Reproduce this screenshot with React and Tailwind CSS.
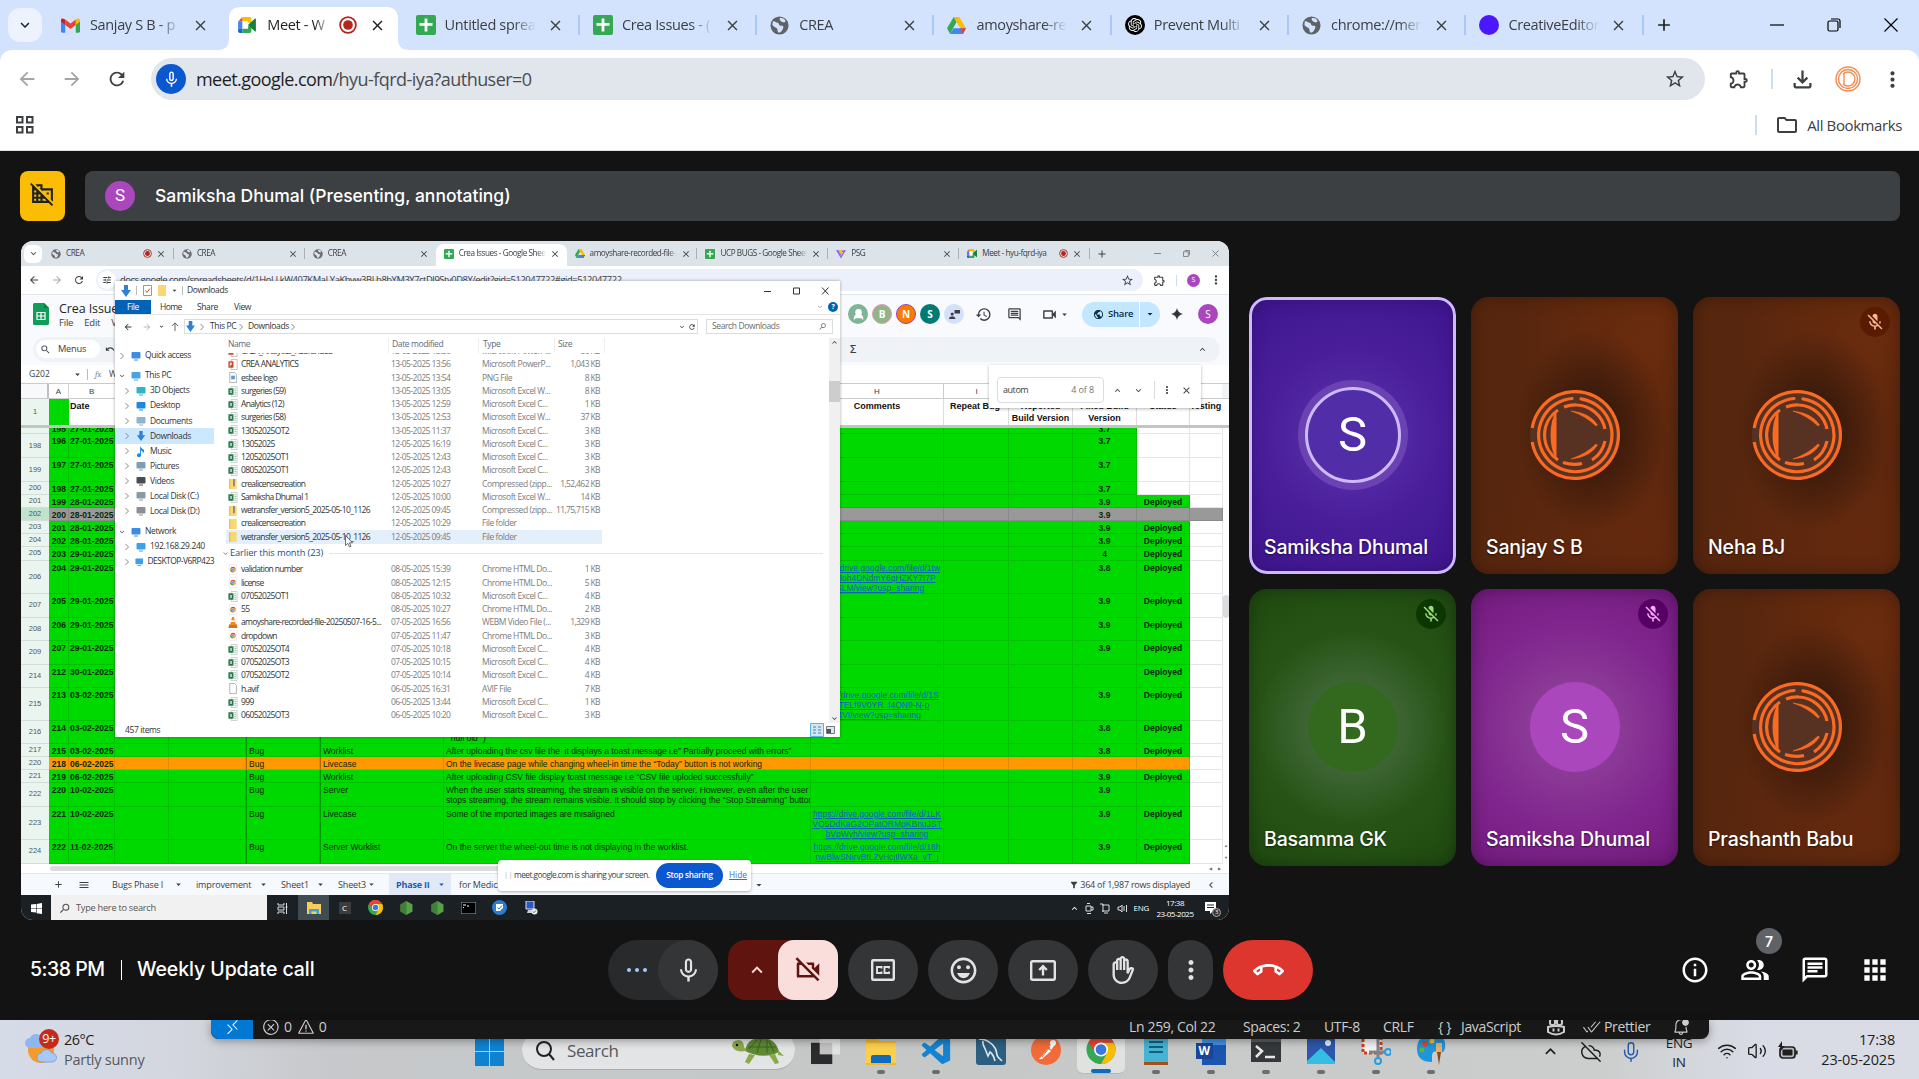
import React from "react";
import {
  MdMicNone, MdMicOff, MdOutlineVideocamOff, MdOutlineEmojiEmotions,
  MdOutlineBackHand, MdMoreVert, MdOutlineCallEnd, MdOutlineInfo, MdOutlinePeopleAlt, MdOutlineChat, MdApps,
  MdDomainDisabled, MdOutlineExtension, MdPublic, MdHistory, MdOutlineComment, MdOutlineVideocam, MdKeyboardArrowUp,
  MdKeyboardArrowDown, MdClose, MdAdd, MdArrowDropDown, MdStarBorder, MdOutlineFolder, MdSearch, MdMenu,
  MdChevronLeft, MdTune, MdFilterAlt, MdUndo, MdOutlineFileDownload, MdArrowBack, MdArrowForward, MdRefresh,
} from "react-icons/md";
import { VscRemote, VscError, VscWarning, VscCheckAll, VscBellDot } from "react-icons/vsc";
import { SiOpenai } from "react-icons/si";
import { BiLogoVisualStudio } from "react-icons/bi";
import { Wifi, Volume2, CloudOff, Mic } from "lucide-react";

/* ---------- small drawn icons ---------- */
const Sheets = ({ c }) => (
  <svg viewBox="0 0 20 20" className={c}>
    <rect width="20" height="20" rx="2" fill="#34a853" />
    <path d="M8.600 3.500h2.800v4.500H16.500v2.800h-5.100V16.500H8.600v-5.700H3.500V8h5.100z" fill="#fff" />
  </svg>
);
const Drive = ({ c }) => (
  <svg viewBox="0 0 20 18" className={c}>
    <path d="M7 0h6l7 12h-6z" fill="#fbbc04" />
    <path d="M7 0l3 5.200L3.200 18 0 12z" fill="#34a853" />
    <path d="M6.800 12H20l-3.200 6H3.200z" fill="#4285f4" />
    <path d="M14 12h6l-3.200 6z" fill="#ea4335" />
  </svg>
);
const MeetLogo = ({ c }) => (
  <svg viewBox="0 0 20 18" className={c}>
    <path d="M5 0v5H0z" fill="#ea4335" />
    <path d="M0 5h5v8H0z" fill="#4285f4" />
    <path d="M0 13h5v5H2a2 2 0 0 1-2-2z" fill="#1967d2" />
    <path d="M5 0h8a2 2 0 0 1 2 2v4.500h-4V5H5z" fill="#fbbc04" />
    <path d="M5 13h6v-2.500h4V16a2 2 0 0 1-2 2H5z" fill="#34a853" />
    <path d="M5 5h6v8H5z" fill="#fff" />
    <path d="M11 9l8-7.200c.5-.4 1-.1 1 .5v13.400c0 .6-.5.900-1 .5z" fill="#188038" />
  </svg>
);
const Gmail = ({ c }) => (
  <svg viewBox="0 0 20 15" className={c}>
    <path d="M0 2v11.500A1.500 1.500 0 0 0 1.500 15H4.500V6z" fill="#4285f4" />
    <path d="M20 2v11.500a1.500 1.500 0 0 1-1.500 1.500H15.500V6z" fill="#34a853" />
    <path d="M15.500 1.200L18 .2c1.200-.4 2 .6 2 1.800v1.400L15.500 7z" fill="#fbbc04" />
    <path d="M4.500 1.200L2 .2C.8-.2 0 .8 0 2v1.400L4.500 7z" fill="#c5221f" />
    <path d="M4.500 1.200L10 5.400l5.500-4.200V7L10 11.200 4.500 7z" fill="#ea4335" />
  </svg>
);
const Chrome = ({ c }) => (
  <svg viewBox="0 0 30 30" className={c}>
    <circle cx="15" cy="15" r="15" fill="#34a853" />
    <path d="M15 8h13.300A15 15 0 0 1 15 30l6-11z" fill="#fbbc04" />
    <path d="M2 7.500A15 15 0 0 1 28.300 8H15a7 7 0 0 0-6.300 10z" fill="#ea4335" />
    <circle cx="15" cy="15" r="7.200" fill="#fff" />
    <circle cx="15" cy="15" r="5.500" fill="#3b78e7" />
  </svg>
);
const Globe = ({ c, light }) => (
  <svg viewBox="0 0 20 20" className={c}>
    <circle cx="10" cy="10" r="9.500" fill={light ? "#6b6f74" : "#5f6368"} />
    <path d="M3 5.500c2.500-.5 3 1.500 5 1.500 1.500 0 1 2 2.500 3s3-.5 3.500 1-1 3-1.500 4.500c-1 1.500-3 2.500-4 1.500s0-3-1.500-4S3.500 11 2.500 9.500zM10 2.500c2-1 5 0 6 2s-1 2.500-2.500 2S10 4.500 10 2.500z" fill={light ? "#dfe5ea" : "#d3e3fd"} />
  </svg>
);
const Vite = ({ c }) => (
  <svg viewBox="0 0 20 20" className={c}>
    <path d="M0 2l10 1.500L20 2 10 19z" fill="#8a5cf6" />
    <path d="M6 2l7-1-1 5h3l-6 10 1-7H7z" fill="#fbc02d" />
  </svg>
);
const Rec = ({ c }) => (
  <svg viewBox="0 0 16 16" className={c}>
    <circle cx="8" cy="8" r="7" fill="none" stroke="#b3261e" strokeWidth="1.600" />
    <circle cx="8" cy="8" r="4.300" fill="#b3261e" />
  </svg>
);
const Swirl = ({ c }) => (
  <svg viewBox="-45 -45 90 90" className={c} fill="none" stroke="#fb6a22" strokeWidth="3.200">
    <circle r="45" fill="#573222" stroke="none" />
    <path d="M-42.800 -7A43.400 43.400 0 1 1 -42.800 7" />
    <path d="M6 -36.200A36.700 36.700 0 1 1 -3 -36.500" strokeLinecap="round" />
    <path d="M-11 -28Q-4 -30.500 2 -30A30 30 0 0 1 30 -6" />
    <path d="M30 6A30 30 0 0 1 17 25M7 28.500Q-2 30.500 -12 27.500" />
    <path d="M-17 -25A30 30 0 0 0 -17 25" />
    <path d="M-18.500 -25.500V25.500Q-24.500 14 -24.500 0Q-24.500 -14 -18.500 -25.500Z" fill="#fb6a22" stroke="none" />
    <path d="M-4 -24Q15 -22 22.500 -10L21 -9Q11 -19 -4 -24ZM-4 24Q15 22 22.500 10L21 9Q11 19 -4 24Z" fill="#fb6a22" strokeWidth=".6" />
  </svg>
);
const FileIcon = ({ k }) => {
  if (k === "z" || k === "f")
    return (
      <svg viewBox="0 0 10 12" className="h-[11px] w-[10px]">
        <path d="M1 1h8v11H1z" fill="#f8d775" />
        <path d="M1 1h1v11H1z" fill="#e3b341" />
        {k === "z" && <path d="M5 1h2v8H5z" fill="#8f8a78" />}
      </svg>
    );
  if (k === "c")
    return (
      <svg viewBox="0 0 10 12" className="h-[11px] w-[10px]">
        <path d="M1 .500h8v11H1z" fill="#fff" stroke="#ddd" strokeWidth=".5" />
        <circle cx="5" cy="6.200" r="3" fill="#e8a33d" />
        <path d="M2.200 5a3 3 0 0 1 5.600 0z" fill="#db4437" />
        <path d="M2 6a3 3 0 0 0 3 3V6z" fill="#2e9e57" />
        <circle cx="5" cy="6.200" r="1.400" fill="#4285f4" stroke="#fff" strokeWidth=".5" />
      </svg>
    );
  if (k === "v")
    return (
      <svg viewBox="0 0 10 12" className="h-[11px] w-[10px]">
        <path d="M4 0h2l2 8H2z" fill="#f08a1d" />
        <path d="M3.200 3.500h3.600l.5 2H2.700z" fill="#fff" />
        <path d="M1 8h8l1 4H0z" fill="#d9730d" />
      </svg>
    );
  if (k === "p")
    return (
      <svg viewBox="0 0 10 12" className="h-[11px] w-[10px]">
        <path d="M3 .500h6.500v11H3z" fill="#fff" stroke="#d9826b" strokeWidth=".6" />
        <path d="M0 2.500h5.500v7H0z" fill="#c8472b" />
        <path d="M2 4v4M2 4.400h1.400v1.600H2" stroke="#fff" strokeWidth=".8" fill="none" />
      </svg>
    );
  if (k === "d" || k === "i")
    return (
      <svg viewBox="0 0 10 12" className="h-[11px] w-[10px]">
        <path d="M1.500 .500h5l2.200 2.200v8.800H1.500z" fill="#fff" stroke="#8b8b8b" strokeWidth=".7" />
        {k === "i" && <path d="M3 4h4v4H3z" fill="#5b9bd5" />}
      </svg>
    );
  return (
    <svg viewBox="0 0 10 12" className="h-[11px] w-[10px]">
      <path d="M3 .500h6.500v11H3z" fill="#fff" stroke="#9bb5a5" strokeWidth=".6" />
      <path d="M6.500 3h2M6.500 5h2M6.500 7h2M6.500 9h2" stroke="#6f9d80" strokeWidth=".7" />
      <path d="M0 2.500h5.500v7H0z" fill="#1f7246" />
      <path d="M1.600 4.200l2.300 3.600M3.900 4.200L1.600 7.800" stroke="#fff" strokeWidth=".8" />
    </svg>
  );
};

/* ---------- browser chrome ---------- */
const tabs = [
  { t: "Sanjay S B - p", i: <Gmail c="h-[15px] w-[19px]" /> },
  { t: "Meet - W", i: <MeetLogo c="h-4 w-[18px]" />, active: true },
  { t: "Untitled sprea", i: <Sheets c="size-5" />, sep: true },
  { t: "Crea Issues - (", i: <Sheets c="size-5" />, sep: true },
  { t: "CREA", i: <Globe c="size-[19px]" />, sep: true },
  { t: "amoyshare-re", i: <Drive c="h-[17px] w-[19px]" />, sep: true },
  { t: "Prevent Multi", i: <span className="flex size-5 items-center justify-center rounded-full bg-black text-white"><SiOpenai size={14} /></span>, sep: true },
  { t: "chrome://mem", i: <Globe c="size-[19px]" />, sep: true },
  { t: "CreativeEditor", i: <span className="size-5 rounded-full bg-[#4a17ff]" />, sep: true },
];

function Browser() {
  return (
    <header className="h-[151px] shrink-0 bg-[#d3e3fd] font-['Open_Sans',sans-serif] text-[#1f1f1f]">
      <div className="flex h-[50px] items-stretch">
        <div className="flex w-12 items-center pl-2">
          <div className="flex h-[34px] w-[34px] items-center justify-center rounded-xl bg-[#ecf3fe]"><MdKeyboardArrowDown size={18} /></div>
        </div>
        {tabs.map((b, i) => (
          <div key={i} className="relative flex w-[177.300px] items-center">
            {b.active && (
              <svg viewBox="0 0 193 43" className="absolute -left-2 bottom-0 h-[43px] w-[193px]">
                <path d="M0 43c9 0 12-4 12-12V12C12 4 16 0 24 0h145c8 0 12 4 12 12v19c0 8 3 12 12 12z" fill="#fff" />
              </svg>
            )}
            <div className="relative flex w-full items-center pl-[13px]">
              <div className="flex w-[29px] items-center">{b.i}</div>
              <div className={"overflow-hidden whitespace-nowrap text-[14.500px] tracking-[-0.350px] [mask-image:linear-gradient(to_right,#000_75%,transparent)] " + (b.active ? "w-[64px]" : "w-[91px] text-[#3c4043]")}>{b.t}</div>
              {b.active && <Rec c="ml-[8px] size-[18px]" />}
              <MdClose size={17} className={b.active ? "ml-[12px]" : "ml-[11px] text-[#3c4043]"} />
            </div>
            {b.sep && <div className="absolute right-0 h-5 w-0.5 bg-[#a8c7fa]" />}
          </div>
        ))}
        <div className="flex flex-1 items-center justify-between pl-[10px] pr-[21px]">
          <MdAdd size={20} />
          <div className="flex items-center gap-[43px]">
            <svg viewBox="0 0 14 14" className="size-3.5" stroke="#000" strokeWidth="1.200"><path d="M0 7h14" /></svg>
            <svg viewBox="0 0 14 14" className="size-3.5" stroke="#000" strokeWidth="1.200" fill="none"><rect x="1" y="3" width="10" height="10" rx="1.500" /><path d="M4 1h7a2 2 0 0 1 2 2v7" /></svg>
            <svg viewBox="0 0 14 14" className="size-3.5" stroke="#000" strokeWidth="1.200"><path d="M.5.500l13 13M13.500.500l-13 13" /></svg>
          </div>
        </div>
      </div>
      <div className="h-[100px] rounded-t-xl bg-white pt-2">
        <div className="flex h-[42px] items-center">
          <div className="flex w-[151px] items-center gap-[23px] pl-4">
            <MdArrowBack size={22} className="text-[#a3a5a8]" />
            <MdArrowForward size={22} className="text-[#a3a5a8]" />
            <MdRefresh size={22} className="text-[#3c4043]" />
          </div>
          <div className="flex h-[42px] w-[1554px] items-center rounded-full bg-[#e1e5ec] pl-[5px] pr-[19px]">
            <span className="flex size-[30px] items-center justify-center rounded-full bg-[#0b57d0] text-white"><MdMicNone size={19} /></span>
            <span className="ml-[10px] flex-1 whitespace-nowrap text-[18px] tracking-[-0.550px]">meet.google.com<span className="text-[#4a4d51]">/hyu-fqrd-iya?authuser=0</span></span>
            <MdStarBorder size={22} className="text-[#3c4043]" />
          </div>
          <MdOutlineExtension size={22} className="ml-[23px] text-[#3c4043]" />
          <div className="ml-[21px] h-5 w-0.5 bg-[#c9dcfb]" />
          <MdOutlineFileDownload size={27} className="ml-[16px] text-[#3c4043]" />
          <svg viewBox="0 0 26 26" className="ml-[19px] size-[26px]" fill="none" stroke="#f58a4f" strokeWidth="1.400">
            <circle cx="13" cy="13" r="12" /><circle cx="13" cy="13" r="9.500" /><path d="M8 8a7 7 0 1 1 0 10" /><path d="M9 7l9 6-9 6z" fill="#fff" stroke="none" /><path d="M9 7v12" />
          </svg>
          <MdMoreVert size={25} className="ml-[19px] text-[#3c4043]" />
        </div>
        <div className="flex h-[50px] items-center justify-between pl-4 pr-[17px]">
          <svg viewBox="0 0 18 18" className="size-[18px]" fill="none" stroke="#3c4043" strokeWidth="2"><path d="M1 1h5.500v5.500H1zM11 1h5.500v5.500H11zM1 11h5.500v5.500H1zM11 11h5.500v5.500H11z" /></svg>
          <div className="flex items-center">
            <div className="h-5 w-0.5 bg-[#c9dcfb]" />
            <MdOutlineFolder size={24} className="ml-[18px] text-[#3c4043]" />
            <span className="ml-2 text-[15px] tracking-[-0.400px] text-[#3c4043]">All Bookmarks</span>
          </div>
        </div>
      </div>
      <div className="h-px bg-[#dfe3e0]" />
    </header>
  );
}

/* ---------- shared spreadsheet ---------- */
const innerTabs = [
  { t: "CREA", i: <Globe light c="size-[10px] shrink-0" />, rec: true, sep: true },
  { t: "CREA", i: <Globe light c="size-[10px] shrink-0" />, sep: true },
  { t: "CREA", i: <Globe light c="size-[10px] shrink-0" /> },
  { t: "Crea Issues - Google Sheets", i: <Sheets c="size-[10px] shrink-0" />, active: true },
  { t: "amoyshare-recorded-file-2", i: <Drive c="h-[9px] w-[10px] shrink-0" />, sep: true },
  { t: "UCP BUGS - Google Sheets", i: <Sheets c="size-[10px] shrink-0" />, sep: true },
  { t: "PSG", i: <Vite c="size-[10px] shrink-0" />, sep: true },
  { t: "Meet - hyu-fqrd-iya", i: <MeetLogo c="h-[9px] w-[10px] shrink-0" />, rec: true, sep: true },
];

const G = "bg-[#00d900]";
const DR = "drive.google.com/file/d/";
const rows = [
  { n: "197", h: "h-[6px]", a: "195", b: "27-01-2025", k: "3.7", nodep: 1, cut: 1 },
  { n: "198", h: "h-[24px]", a: "196", b: "27-01-2025", k: "3.7", nodep: 1 },
  { n: "199", h: "h-[24px]", a: "197", b: "27-01-2025", k: "3.7", nodep: 1 },
  { n: "200", h: "h-[13px]", a: "198", b: "27-01-2025", k: "3.7", nodep: 1 },
  { n: "201", h: "h-[13px]", a: "199", b: "28-01-2025", k: "3.9", l: 1 },
  { n: "202", h: "h-[13px]", a: "200", b: "28-01-2025", k: "3.9", bg: "bg-[#999999]", all: 1 },
  { n: "203", h: "h-[13px]", a: "201", b: "28-01-2025", k: "3.9", l: 1 },
  { n: "204", h: "h-[13px]", a: "202", b: "28-01-2025", k: "3.9", l: 1 },
  { n: "205", h: "h-[13.500px]", a: "203", b: "29-01-2025", k: "4", l: 1 },
  { n: "206", h: "h-[33.500px]", a: "204", b: "29-01-2025", k: "3.8", l: 1, link: ["https://" + DR + "1tw", "TWS8oh4DNdmY6qHZKY7I7P", "lvSLM/view?usp=sharing"] },
  { n: "207", h: "h-[23.500px]", a: "205", b: "29-01-2025", k: "3.9", l: 1 },
  { n: "208", h: "h-[23.500px]", a: "206", b: "29-01-2025", k: "3.9", l: 1 },
  { n: "209", h: "h-[23.500px]", a: "207", b: "29-01-2025", k: "3.9", l: 1 },
  { n: "214", h: "h-[23.500px]", a: "212", b: "30-01-2025", k: "", l: 1 },
  { n: "215", h: "h-[33px]", a: "213", b: "03-02-2025", k: "3.9", l: 1, link: ["https://" + DR + "1S", "agvTELf9V0YR_f4ON9-N-p", "s4VI/view?usp=sharing"] },
  { n: "216", h: "h-[23px]", a: "214", b: "03-02-2025", k: "3.8", l: 1, g: ["The worklist shows the value as (", "\u201cnull old\u201d )"], drop: 1 },
  { n: "217", h: "h-[13px]", a: "215", b: "03-02-2025", k: "3.8", l: 1, e: "Bug", f: "Worklist", g: ["After uploading the csv file the\u00a0 it displays a toast message i.e\u201d Partially proceed with errors\u201d"] },
  { n: "220", h: "h-[13px]", a: "218", b: "06-02-2025", k: "", bg: "bg-[#ff9900]", e: "Bug", f: "Livecase", g: ["On the livecase page while changing wheel-in time the \u201cToday\u201d button is not working"] },
  { n: "221", h: "h-[13px]", a: "219", b: "06-02-2025", k: "3.9", l: 1, e: "Bug", f: "Worklist", g: ["After uploading CSV file display toast message i.e \u201cCSV file uploded successfully\u201d"] },
  { n: "222", h: "h-[23.500px]", a: "220", b: "10-02-2025", k: "3.9", e: "Bug", f: "Server", g: ["When the user starts streaming, the stream is visible on the server. However, even after the user", "stops streaming, the stream remains visible. It should stop by clicking the \u201cStop Streaming\u201d button"] },
  { n: "223", h: "h-[33.500px]", a: "221", b: "10-02-2025", k: "3.9", l: 1, e: "Bug", f: "Livecase", g: ["Some of the imported images are misaligned"], link: ["https://" + DR + "1LK", "VQ5DdKaG2OPatORMpKBnuJST", "bVpWyh/view?usp=sharing"] },
  { n: "224", h: "h-[23.500px]", a: "222", b: "11-02-2025", k: "3.9", l: 1, e: "Bug", f: "Server Worklist", g: ["On the server the wheel-out time is not displaying in the worklist."], link: ["https://" + DR + "18h", "nwBlwSNirvBtLZvHcjIlWXa_vT_j"] },
];
const cell = "shrink-0 overflow-hidden border-b border-r border-black/10 pt-[2px] whitespace-nowrap ";

function Row({ r }) {
  const bg = r.bg || G;
  const side = r.nodep ? "bg-white" : bg;
  return (
    <div className={"flex overflow-hidden text-[8.500px] leading-[10px] text-[#062a06] " + r.h}>
      <div className={"flex w-[28px] shrink-0 items-center justify-center border-b border-[#d5ddd9] text-[7.500px] text-[#555] " + (r.all ? "bg-[#bfe3cb]" : "bg-[#e9f5ee]")}>{r.cut ? "" : r.n}</div>
      <div className={cell + "w-[20px] pr-[2px] text-right font-bold " + bg}><div className={r.cut ? "-mt-[6px]" : ""}>{r.a}</div></div>
      <div className={cell + "w-[46px] pl-[1px] font-bold " + bg}><div className={r.cut ? "-mt-[6px]" : ""}>{r.b}</div></div>
      <div className={cell + "w-[54px] " + bg} />
      <div className={cell + "w-[77px] " + bg} />
      <div className={cell + "w-[74px] border-l border-l-black/30 pl-[2px] " + bg}>{r.e}</div>
      <div className={cell + "w-[124px] border-l border-l-black/30 pl-[2px] " + bg}>{r.f}</div>
      <div className={cell + "w-[367px] pl-[2px] " + bg}>
        {r.g && r.g.map((x, i) => <div key={i} className={r.drop && i ? "pl-[2px]" : ""}>{x}</div>)}
      </div>
      <div className={cell + "w-[133px] text-center text-[#0b62c4] underline " + bg}>
        {r.link && r.link.map((x) => <div key={x}>{x}</div>)}
      </div>
      <div className={cell + "w-[65px] " + bg} />
      <div className={cell + "w-[64px] " + bg} />
      <div className={cell + "w-[64px] text-center font-bold " + bg}><div className={r.cut ? "-mt-[6px]" : ""}>{r.k}</div></div>
      <div className={cell + "w-[53px] text-center font-bold " + side}>{r.l ? "Deployed" : ""}</div>
      <div className={cell + "w-[33px] " + (r.all ? bg : "bg-white")} />
    </div>
  );
}

const Avatar = ({ t, c }) => <span className={"flex size-5 items-center justify-center rounded-full text-[10px] font-bold text-white " + c}>{t}</span>;

const sheetTabs = [
  ["Bugs Phase I", "w-[84px]"],
  ["improvement", "w-[85px]"],
  ["Sheet1", "w-[57px]"],
  ["Sheet3", "w-[51px]"],
];

function SharedScreen() {
  return (
    <div className="relative flex h-[679px] w-[1208px] flex-col overflow-hidden rounded-xl bg-white font-['Open_Sans',sans-serif] text-[#3c4043]">
      {/* tab strip */}
      <div className="flex h-[25px] shrink-0 bg-[#dce3e9]">
        <div className="flex w-[22px] items-center pl-[3px]"><span className="flex h-[18px] w-[18px] items-center justify-center rounded-md bg-white"><MdKeyboardArrowDown size={11} /></span></div>
        {innerTabs.map((b, i) => (
          <div key={i} className={"relative flex w-[130.900px] items-center pl-[8px] " + (b.active ? "mt-[3px] rounded-t-lg bg-white pb-[3px]" : "")}>
            {b.i}
            <span className={"ml-[5px] overflow-hidden whitespace-nowrap text-[8.200px] tracking-[-0.450px] " + (b.rec ? "w-[72px]" : "w-[87px] [mask-image:linear-gradient(to_right,#000_90%,transparent)]")}>{b.t}</span>
            {b.rec && <Rec c="ml-[5px] size-[9px]" />}
            <MdClose size={10} className="ml-[4px] shrink-0" />
            {b.sep && <div className="absolute right-0 h-[11px] w-px bg-[#a9b0b6]" />}
          </div>
        ))}
        <div className="flex flex-1 items-center pl-[6px]">
          <MdAdd size={12} />
          <svg viewBox="0 0 8 8" className="ml-[46px] size-[7px]" stroke="#777" fill="none"><path d="M0 4h8" /></svg>
          <svg viewBox="0 0 8 8" className="ml-[22px] size-[7px]" stroke="#777" fill="none"><path d="M.5 2h5.500v5.500H.5zM2 .500h5.500V6" /></svg>
          <svg viewBox="0 0 8 8" className="ml-[22px] size-[7px]" stroke="#777" fill="none"><path d="M.5.500l7 7M7.500.500l-7 7" /></svg>
        </div>
      </div>
      {/* address row */}
      <div className="flex h-[29px] shrink-0 items-center border-b border-[#e3e6ea] bg-white">
        <MdArrowBack size={12} className="ml-[7px]" />
        <MdArrowForward size={12} className="ml-[11px] text-[#aaa]" />
        <MdRefresh size={12} className="ml-[10px]" />
        <div className="ml-[11px] flex h-[22px] w-[1047px] items-center rounded-full bg-[#ebf0fa] pl-[2px] pr-[9px]">
          <span className="flex size-[18px] items-center justify-center rounded-full bg-white"><MdTune size={10} /></span>
          <span className="ml-[4px] flex-1 text-[9.400px] tracking-[-0.440px]">docs.google.com/spreadsheets/d/1HoLLkW407KMaLYaKhyw3BLb8bYM3Y7ctDJ9Sty0D8Y/edit?gid=512047722#gid=512047722</span>
          <MdStarBorder size={13} />
        </div>
        <MdOutlineExtension size={13} className="ml-[10px]" />
        <div className="ml-[10px] h-[11px] w-px bg-[#c9dcfb]" />
        <span className="ml-[10px] flex size-[13px] items-center justify-center rounded-full bg-[#ab47bc] text-[7px] text-white">S</span>
        <MdMoreVert size={14} className="ml-[9px]" />
      </div>
      {/* document header */}
      <div className="flex h-[38px] shrink-0 items-center bg-[#f8fafd] pl-3">
        <svg viewBox="0 0 16 22" className="h-[22px] w-4 shrink-0">
          <path d="M1.500 0H11l5 5v15.500a1.500 1.500 0 0 1-1.500 1.500h-13A1.500 1.500 0 0 1 0 20.500v-19A1.500 1.500 0 0 1 1.500 0z" fill="#0f9d58" />
          <path d="M11 0l5 5h-5z" fill="#0b7d45" />
          <path d="M4 9.500h8v7H4zM8 9.500v7M4 13h8" fill="none" stroke="#fff" strokeWidth="1.200" />
        </svg>
        <div className="ml-[10px] w-[789px] shrink-0 pt-[3px]">
          <div className="text-[12.500px] leading-[15px] tracking-[-0.100px] text-[#1f1f1f]">Crea Issues</div>
          <div className="flex gap-[11px] text-[9.500px] leading-[14px] tracking-[-0.200px]"><span>File</span><span>Edit</span><span>View</span></div>
        </div>
        <div className="flex items-center gap-[4px]">
          <Avatar t={<svg viewBox="0 0 12 12" className="size-[13px]" fill="#fff"><circle cx="6" cy="4" r="3" /><path d="M1.500 11q0-6 4.500-6t4.500 6l-2-1.500H3.500z" /></svg>} c="bg-[#7fb496]" />
          <Avatar t="B" c="border border-[#e69ab0] bg-[#90b588]" />
          <Avatar t="N" c="border border-[#9c3fb5] bg-[#fb7a00]" />
          <Avatar t="S" c="bg-[#007b73]" />
          <Avatar t={<svg viewBox="0 0 12 12" className="size-[11px]" fill="#3c4043"><circle cx="3.500" cy="5.500" r="1.700" /><path d="M0 11c0-4 7-4 7 0zM6 1h6v4H6z" /></svg>} c="bg-[#d3e1f8]" />
        </div>
        <MdHistory size={17} className="ml-[11px]" />
        <MdOutlineComment size={15} className="ml-[15px]" />
        <MdOutlineVideocam size={17} className="ml-[19px]" />
        <MdArrowDropDown size={11} className="ml-[1px]" />
        <div className="ml-[12px] flex h-[25px] w-[78px] shrink-0 items-center rounded-full bg-[#c2e7ff] text-[#0b2b45]">
          <MdPublic size={11} className="ml-[11px]" />
          <span className="ml-[4px] w-[26px] text-[9.500px] font-semibold tracking-[-0.200px]">Share</span>
          <div className="ml-[5px] h-full w-px bg-white" />
          <MdArrowDropDown size={12} className="ml-[4px]" />
        </div>
        <svg viewBox="0 0 12 12" className="ml-[11px] size-[12px]"><path d="M6 0q.8 5.200 6 6-5.200.8-6 6-.8-5.200-6-6 5.200-.8 6-6z" fill="#333" /></svg>
        <span className="ml-[15px] flex size-5 items-center justify-center rounded-full bg-[#ab47bc] text-[10px] text-white">S</span>
      </div>
      {/* menu bar */}
      <div className="flex h-[32px] shrink-0 items-center bg-[#f8fafd] pl-[12px] pr-[9px]">
        <div className="flex h-[25px] flex-1 items-center rounded-full bg-[#eff3f8] pl-[3px] pr-[12px]">
          <div className="flex h-[18px] w-[64px] items-center rounded-full bg-white pl-[4px]"><MdSearch size={11} /><span className="ml-[7px] text-[9.300px] tracking-[-0.250px]">Menus</span></div>
          <MdUndo size={10} className="ml-[5px]" />
          <span className="ml-[735px] flex-1 text-[11px] font-semibold">Σ</span>
          <MdKeyboardArrowUp size={11} />
        </div>
      </div>
      {/* formula bar */}
      <div className="flex h-[19px] shrink-0 items-center border-b border-[#c8cccf] bg-white text-[8.500px]">
        <span className="ml-[8px] w-[43px]">G202</span>
        <MdArrowDropDown size={11} />
        <div className="ml-[4px] h-[11px] w-px bg-[#bbb]" />
        <span className="ml-[7px] w-[14px] font-serif italic text-[#888]">fx</span>
        <span>W</span>
      </div>
      {/* column letters */}
      <div className="flex h-[15px] shrink-0 border-b border-[#c8cccf] bg-white font-['Liberation_Sans',sans-serif] text-[8px] leading-[15px]">
        <div className="w-[28px] border-r-2 border-[#c0c0c0] bg-[#f8f9fa]" />
        <div className="w-[20px] border-r border-[#d5d5d5] text-center">A</div>
        <div className="w-[742px] pl-[20px]">B</div>
        <div className="w-[133px] border-r border-[#c8cccf] text-center">H</div>
        <div className="w-[65px] text-center">I</div>
        <div className="w-[213px]" />
        <div className="flex-1 bg-[#f1f3f4]" />
      </div>
      {/* frozen header row */}
      <div className="flex h-[29px] shrink-0 border-b-[3px] border-[#c2c5c4] bg-white font-['Liberation_Sans',sans-serif] text-[9px] font-bold leading-[12px] text-[#111]">
        <div className="flex w-[28px] items-center justify-center bg-[#e9f5ee] text-[7.500px] font-normal text-[#555]">1</div>
        <div className={"w-[20px] " + G} />
        <div className="w-[742px] pl-[1px] pt-[1px]">Date</div>
        <div className="w-[133px] border-r border-[#ddd] pt-[1px] text-center">Comments</div>
        <div className="w-[65px] whitespace-nowrap border-r border-[#ddd] pl-[6px] pt-[1px]">Repeat Bug</div>
        <div className="w-[64px] whitespace-nowrap border-r border-[#ddd] pt-[1px] text-center">Reported<br />Build Version</div>
        <div className="w-[64px] border-r border-[#ddd] pt-[1px] text-center">Fixed Build Version</div>
        <div className="w-[53px] border-r border-[#ddd] pt-[1px] text-center">Status</div>
        <div className="w-[33px] overflow-hidden pt-[1px]">Testing</div>
      </div>
      {/* sheet body */}
      <div className="flex h-[436px] shrink-0">
        <div className="w-[1202px] font-['Liberation_Sans',sans-serif]">{rows.map((r) => <Row key={r.n} r={r} />)}</div>
        <div className="flex flex-1 flex-col bg-white"><div className="mt-[167px] h-[23px] rounded bg-[#dadce0]" /><div className="mt-auto h-[24px] text-center text-[4px] leading-[12px] text-[#666]">▲<br />▼</div></div>
      </div>
      {/* horizontal scroll bar */}
      <div className="flex h-[9px] shrink-0 items-center bg-white pl-[29px]">
        <div className="h-[5px] w-[600px] rounded bg-[#dadce0]" />
        <div className="ml-auto flex gap-[6px] pr-[8px] text-[4px] text-[#666]"><span>◀</span><span>▶</span></div>
      </div>
      {/* sheet tabs */}
      <div className="flex h-[22px] shrink-0 items-center border-t border-[#e3e6ea] bg-[#f6f9fd] text-[9px] tracking-[-0.150px]">
        <MdAdd size={11} className="ml-[32px]" />
        <MdMenu size={12} className="ml-[14px] mr-[22px]" />
        {sheetTabs.map(([t, w]) => (
          <div key={t} className={"flex items-center justify-between " + w}>
            <span className="whitespace-nowrap">{t}</span><MdArrowDropDown size={11} className="mr-[12px]" />
          </div>
        ))}
        <div className="flex h-full w-[62px] items-center justify-between bg-[#e1e9f7] pl-[7px] pr-[4px] font-bold text-[#2458b8]"><span className="whitespace-nowrap tracking-[-0.200px]">Phase II</span><MdArrowDropDown size={11} /></div>
        <span className="ml-[8px] w-[294px]">for Medicaid</span>
        <MdArrowDropDown size={12} />
        <div className="ml-auto flex items-center pr-[12px]"><MdFilterAlt size={10} className="mr-[1px]" /><span className="tracking-[-0.250px]">364 of 1,987 rows displayed</span><MdChevronLeft size={12} className="ml-[15px]" /></div>
      </div>
      <WinTen />
      {/* find in sheet */}
      <div className="absolute left-[968px] top-[124px] flex h-[43px] w-[212px] items-center bg-white pl-[8px] pt-[7px] text-[9px] shadow-[0_1px_3px_rgba(0,0,0,0.3)]">
        <div className="flex h-[26px] w-[107px] items-center justify-between rounded border border-[#dadce0] pl-[5px] pr-[9px]"><span className="tracking-[-0.450px]">autom</span><span className="tracking-[-0.100px] text-[#70757a]">4 of 8</span></div>
        <MdKeyboardArrowUp size={11} className="ml-[8px]" /><MdKeyboardArrowDown size={11} className="ml-[10px]" />
        <div className="ml-[10px] h-[18px] w-px bg-[#dadce0]" />
        <MdMoreVert size={12} className="ml-[6px]" /><MdClose size={11} className="ml-[8px]" />
      </div>
      <Explorer />
      {/* screen share notice */}
      <div className="absolute left-[477px] top-[619px] flex h-[31px] w-[253px] items-center rounded-sm bg-white text-[8.300px] shadow-[0_1px_3px_rgba(0,0,0,0.3)]">
        <span className="ml-[6px] w-[10px] text-[7px] tracking-[1px] text-[#aaa]">||</span>
        <span className="w-[142px] whitespace-nowrap tracking-[-0.520px]">meet.google.com is sharing your screen.</span>
        <span className="flex h-[25px] w-[67px] items-center justify-center rounded-full bg-[#0b57d0] font-semibold tracking-[-0.300px] text-white">Stop sharing</span>
        <span className="ml-[6px] text-[#2f6fd6] underline">Hide</span>
      </div>
    </div>
  );
}

/* ---------- file explorer window ---------- */
const side = [
  { t: "Quick access", k: "#3a8ede", top: 1, gap: 1 },
  { t: "This PC", k: "#4aa3e0", top: 1, open: 1 },
  { t: "3D Objects", k: "#2fb3c9" },
  { t: "Desktop", k: "#1e88e5" },
  { t: "Documents", k: "#8fb3cc" },
  { t: "Downloads", k: "#2f7fd0", sel: 1, down: 1 },
  { t: "Music", k: "#1e88e5", note: 1 },
  { t: "Pictures", k: "#7d9db5" },
  { t: "Videos", k: "#4a4a55" },
  { t: "Local Disk (C:)", k: "#8a9aa5" },
  { t: "Local Disk (D:)", k: "#8a8f94", gap: 1 },
  { t: "Network", k: "#3a8ede", top: 1, open: 1 },
  { t: "192.168.29.240", k: "#3ea0e8" },
  { t: "DESKTOP-V6RP423", k: "#3ea0e8" },
];
const XC = "Microsoft Excel C...", XW = "Microsoft Excel W...", CH = "Chrome HTML Do...";
const recent = [
  ["p", "CREA ANALYTICS", "13-05-2025 13:56", "Microsoft PowerP...", "1,043 KB"],
  ["i", "esbee logo", "13-05-2025 13:54", "PNG File", "8 KB"],
  ["x", "surgeries (59)", "13-05-2025 13:05", XW, "8 KB"],
  ["x", "Analytics (12)", "13-05-2025 12:59", XC, "1 KB"],
  ["x", "surgeries (58)", "13-05-2025 12:53", XW, "37 KB"],
  ["x", "13052025OT2", "13-05-2025 11:37", XC, "3 KB"],
  ["x", "13052025", "12-05-2025 16:19", XC, "3 KB"],
  ["x", "12052025OT1", "12-05-2025 12:43", XC, "3 KB"],
  ["x", "08052025OT1", "12-05-2025 12:43", XC, "3 KB"],
  ["z", "crealicensecreation", "12-05-2025 10:27", "Compressed (zipp...", "1,52,462 KB"],
  ["x", "Samiksha Dhumal 1", "12-05-2025 10:00", XW, "14 KB"],
  ["z", "wetransfer_version5_2025-05-10_1126", "12-05-2025 09:45", "Compressed (zipp...", "11,75,715 KB"],
  ["f", "crealicensecreation", "12-05-2025 10:29", "File folder", ""],
  ["f", "wetransfer_version5_2025-05-10_1126", "12-05-2025 09:45", "File folder", "", 1],
];
const earlier = [
  ["c", "validation number", "08-05-2025 15:39", CH, "1 KB"],
  ["c", "license", "08-05-2025 12:15", CH, "5 KB"],
  ["x", "07052025OT1", "08-05-2025 10:32", XC, "4 KB"],
  ["c", "55", "08-05-2025 10:27", CH, "2 KB"],
  ["v", "amoyshare-recorded-file-20250507-16-5...", "07-05-2025 16:56", "WEBM Video File (...", "1,329 KB"],
  ["c", "dropdown", "07-05-2025 11:47", CH, "3 KB"],
  ["x", "07052025OT4", "07-05-2025 10:18", XC, "4 KB"],
  ["x", "07052025OT3", "07-05-2025 10:15", XC, "4 KB"],
  ["x", "07052025OT2", "07-05-2025 10:14", XC, "4 KB"],
  ["d", "h.avif", "06-05-2025 16:31", "AVIF File", "7 KB"],
  ["x", "999", "06-05-2025 13:44", XC, "1 KB"],
  ["x", "06052025OT3", "06-05-2025 10:20", XC, "3 KB"],
];
const FileRow = ({ f }) => (
  <div className={"ml-[12px] flex h-[13.250px] w-[376px] items-center whitespace-nowrap text-[#7b7b7b] " + (f[5] ? "bg-[#e3f0fb]" : "")}>
    <span className="w-[15px] pl-[2px]"><FileIcon k={f[0]} /></span>
    <span className="w-[150px] tracking-[-0.650px] text-[#333]">{f[1]}</span>
    <span className="w-[91px] tracking-[-0.550px]">{f[2]}</span>
    <span className="w-[68px] tracking-[-0.420px]">{f[3]}</span>
    <span className="flex-1 pr-[2px] text-right tracking-[-0.600px]">{f[4]}</span>
  </div>
);
const DownArrow = ({ c }) => <svg viewBox="0 0 10 12" className={c}><path d="M3 0h4v5h3l-5 7-5-7h3z" fill="#2f82d3" /></svg>;
const SideIcon = ({ s }) => {
  if (s.down) return <DownArrow c="h-[10px] w-[10px]" />;
  if (s.note) return <svg viewBox="0 0 10 12" className="h-[11px] w-[10px]" fill={s.k}><path d="M4 0q1 3 4 4 1 2-1 4 0-3-2-3v5a2.200 2 0 1 1-1-1.600z" /></svg>;
  return <svg viewBox="0 0 10 10" className="size-[10px]"><rect x=".5" y="1" width="9" height="6.500" rx="1" fill={s.k} /><path d="M3 9h4" stroke={s.k} /></svg>;
};
const Caret = ({ c }) => <svg viewBox="0 0 4 8" className={"h-[8px] w-[4px] " + (c || "")} fill="none" stroke="#888"><path d="M.5 1l3 3-3 3" /></svg>;

function Explorer() {
  return (
    <div className="absolute left-[94px] top-[40px] flex h-[456px] w-[725px] flex-col bg-white text-[8.500px] tracking-[-0.380px] text-[#333] shadow-[0_0_3px_rgba(0,0,0,0.35)]">
      <div className="flex h-[19px] items-center pl-[6px]">
        <DownArrow c="h-[12px] w-[10px]" />
        <div className="ml-[5px] h-[9px] w-px bg-[#bbb]" />
        <svg viewBox="0 0 9 11" className="ml-[6px] h-[11px] w-[9px]"><path d="M.5.500h8v10h-8z" fill="#fff" stroke="#999" /><path d="M2.500 5.500l1.500 2 3-4" fill="none" stroke="#d4543a" /></svg>
        <span className="ml-[6px] h-[11px] w-[8px] bg-[#f8d775]" />
        <MdArrowDropDown size={9} className="ml-[4px]" />
        <div className="ml-[3px] h-[9px] w-px bg-[#bbb]" />
        <span className="ml-[4px]">Downloads</span>
        <svg viewBox="0 0 66 8" className="ml-auto mr-[11px] h-[8px] w-[66px]" stroke="#333" fill="none"><path d="M1 4.500h7M30.500 1h6v6h-6zM59 .500l6.500 7M65.500.500l-6.500 7" /></svg>
      </div>
      <div className="flex h-[15px] items-center border-b border-[#e4e4e4]">
        <span className="flex h-full w-[36px] items-center justify-center bg-[#0063b8] text-white">File</span>
        <span className="ml-[9px] w-[37px] tracking-[-0.550px]">Home</span><span className="w-[37px]">Share</span><span>View</span>
        <MdKeyboardArrowDown size={8} className="ml-auto text-[#999]" />
        <span className="ml-[4px] mr-[2px] flex size-[10px] items-center justify-center rounded-full bg-[#0063b1] text-[7px] font-bold text-white">?</span>
      </div>
      <div className="flex h-[23px] items-center pl-[8px]">
        <MdArrowBack size={10} /><MdArrowForward size={10} className="ml-[9px] text-[#bbb]" /><MdKeyboardArrowDown size={7} className="ml-[6px]" />
        <svg viewBox="0 0 8 10" className="ml-[6px] h-[9px] w-[8px]" stroke="#555" fill="none"><path d="M4 10V1M.5 4.500L4 1l3.500 3.500" /></svg>
        <div className="ml-[5px] flex h-[15px] w-[514px] items-center border border-[#dcdcdc] pl-[1px]">
          <DownArrow c="h-[11px] w-[9px]" />
          <Caret c="ml-[5px] mr-[6px]" /><span className="w-[29px] whitespace-nowrap">This PC</span><Caret c="mr-[5px]" /><span className="w-[43px]">Downloads</span><Caret c="mr-auto" />
          <MdKeyboardArrowDown size={8} className="mr-[2px]" /><MdRefresh size={8} className="mr-[1px]" />
        </div>
        <div className="ml-[8px] flex h-[15px] w-[127px] items-center justify-between border border-[#dcdcdc] px-[5px] text-[#6b6b6b]"><span>Search Downloads</span><MdSearch size={9} className="-scale-x-100" /></div>
      </div>
      <div className="flex h-[385px]">
        <div className="w-[99px] pt-[10px]">
          {side.map((s) => (
            <div key={s.t} className={"flex h-[15.100px] items-center whitespace-nowrap " + (s.sel ? "bg-[#cce8ff] " : "") + (s.gap ? "mb-[5px]" : "")}>
              <span className={s.top ? "ml-[5px] w-[11px]" : "ml-[10px] w-[11px]"}>{s.open ? <MdKeyboardArrowDown size={8} className="-ml-[2px]" /> : <Caret />}</span>
              <SideIcon s={s} />
              <span className={"ml-[4px] " + (s.t.startsWith("DESK") ? "tracking-[-0.550px]" : "")}>{s.t}</span>
            </div>
          ))}
        </div>
        <div className="flex-1">
          <div className="flex h-[15px] items-center text-[#5b6b83]">
            <span className="ml-[14px] h-full w-[160px]">Name</span><span className="h-full w-[90px] border-l border-[#eee] pl-[3px]">Date modified</span><span className="h-full w-[76px] border-l border-[#eee] pl-[4px]">Type</span><span className="h-full w-[51px] border-x border-[#eee] pl-[3px]">Size</span>
          </div>
          <div className="flex h-[5px] items-end overflow-hidden"><FileRow f={["p", "CREA_Analytics_Rebranded", "13-05-2025 13:56", "Microsoft PowerP...", "86 KB"]} /></div>
          {recent.map((f, i) => <FileRow key={i} f={f} />)}
          <div className="flex h-[19.500px] items-center pl-[7px] text-[9.300px] text-[#2b4a8b]">
            <MdKeyboardArrowDown size={9} className="text-[#888]" /><span className="tracking-[-0.120px]">Earlier this month (23)</span><div className="ml-[6px] mr-[6px] h-px flex-1 bg-[#e5e5e5]" />
          </div>
          {earlier.map((f, i) => <FileRow key={i} f={f} />)}
        </div>
        <div className="flex w-[11px] flex-col items-center justify-between bg-[#f0f0f0]"><MdKeyboardArrowUp size={9} /><MdKeyboardArrowDown size={9} /></div>
        <div className="absolute right-0 top-[100px] h-[21px] w-[11px] bg-[#cdcdcd]" />
      </div>
      <div className="flex h-[14px] items-center pl-[10px] pr-[5px]">
        <span className="flex-1">457 items</span>
        <svg viewBox="0 0 14 14" className="size-[14px]"><path d="M.5.500h13v13H.5z" fill="#cce8f8" stroke="#5fb2e0" /><path d="M3 4h3M3 7h3M3 10h3M8 4h3M8 7h3M8 10h3" stroke="#6a7b85" /></svg>
        <svg viewBox="0 0 9 8" className="ml-[2px] h-[8px] w-[9px]"><path d="M.5.500h8v7h-8z" fill="#dde6ee" stroke="#777" /><path d="M1 3h4v4H1z" fill="#456" /></svg>
      </div>
      <svg viewBox="0 0 8 13" className="absolute left-[230px] top-[254px] h-[13px] w-[8px]"><path d="M.5.500v10l2.400-2.200L4.500 12l1.500-.7-1.500-3.500h3z" fill="#fff" stroke="#333" strokeWidth=".7" /></svg>
    </div>
  );
}

function WinTen() {
  const u = "flex h-full w-[31px] items-center justify-center ";
  return (
    <div className="flex h-[26px] shrink-0 items-center bg-[#1b2024] text-white">
      <div className="flex w-[30px] justify-center"><svg viewBox="0 0 11 11" className="size-[11px]" fill="#fff"><path d="M0 1.500L5 1v4H0zM5.600.900L11 0v5H5.600zM0 5.600h5v4L0 9zM5.600 5.600H11V11l-5.400-.8z" /></svg></div>
      <div className="flex h-full w-[216px] items-center bg-[#f1f1f1] pl-[7px] text-[9.200px] tracking-[-0.250px] text-[#555]"><MdSearch size={13} className="mr-[5px] -scale-x-100" />Type here to search</div>
      <div className={u}><svg viewBox="0 0 11 11" className="size-[11px]" stroke="#ddd" fill="none"><path d="M1 0v2h6V0M1 11V9h6v2M1 4h6v3H1zM9.500 0v11M8.500 4h2" /></svg></div>
      <div className={u + "border-b border-[#76b9ed] bg-[#414b52]"}><svg viewBox="0 0 14 12" className="h-[12px] w-[14px]"><path d="M0 0h5l1 2h8v10H0z" fill="#f8ce58" /><path d="M2 12V7h10v5H9.500V9.500h-5V12z" fill="#3e9fe6" /></svg></div>
      <div className={u}><span className="flex size-[12px] items-center justify-center bg-[#3a3d40] text-[8px]">C</span></div>
      <div className={u + "border-b border-[#3f78a5]"}><Chrome c="size-[15px]" /></div>
      {[0, 1].map((i) => <div key={i} className={u + "border-b border-[#3f78a5]"}><svg viewBox="0 0 12 14" className="h-[14px] w-[13px]"><path d="M6 0l6 3.500v7L6 14l-6-3.500v-7z" fill="#5b9e48" /><path d="M6 0v14l-6-3.500v-7z" fill="#417e38" /></svg></div>)}
      <div className={u + "border-b border-[#3f78a5]"}><svg viewBox="0 0 15 12" className="h-[12px] w-[15px]"><path d="M0 0h15v12H0z" fill="#000" stroke="#aaa" /><path d="M2 3h3M6 4h2M2 5l1 1" stroke="#fff" /></svg></div>
      <div className={u + "border-b border-[#3f78a5]"}><svg viewBox="0 0 15 15" className="size-[15px]"><circle cx="7.500" cy="7.500" r="7.500" fill="#2c7cd0" /><path d="M4 4h7v4l-3 3H4z" fill="#fff" /><path d="M5.500 7.500l1.500 1.500 3-3.500" stroke="#2c7cd0" fill="none" /></svg></div>
      <div className={u + "border-b border-[#3f78a5]"}><svg viewBox="0 0 14 14" className="size-[14px]"><path d="M2 0h8v8H2z" fill="#2b55c8" stroke="#dde" /><path d="M4 9h5v3H3z" fill="#ccc" /><circle cx="10.500" cy="10.500" r="3" fill="#eee" /><path d="M9 10.500l1 1.200 2-2.400" stroke="#393" fill="none" /></svg></div>
      <div className="ml-auto flex items-center pr-[12px] text-[8px] tracking-[-0.250px]">
        <MdKeyboardArrowUp size={11} />
        <svg viewBox="0 0 44 11" className="ml-[5px] h-[11px] w-[44px]" stroke="#ddd" fill="none"><path d="M1 3h5v5H1zM6 4h2v3H6M2 .500h3M2 10.500h4M17 2h7v6h-7M15 1h3v8M19 10h4M33 4h2l2-2v7l-2-2h-2zM39 3v5M41.500 2v7" /></svg>
        <span className="ml-[4px]">ENG</span>
        <span className="ml-[7px] w-[38px] whitespace-nowrap text-center leading-[11px] tracking-[-0.450px]">17:38<br />23-05-2025</span>
        <div className="relative ml-[11px]"><svg viewBox="0 0 12 12" className="size-[12px]"><path d="M0 0h11v9H8l-3 3V9H0z" fill="#fff" /><path d="M2 3h7M2 5.500h7" stroke="#222" /></svg><span className="absolute -bottom-[3px] -right-[4px] flex size-[9px] items-center justify-center rounded-full border border-[#aaa] bg-[#333] text-[6px]">3</span></div>
      </div>
    </div>
  );
}

/* ---------- call participants ---------- */
const brown = "bg-[radial-gradient(ellipse_75px_100px_at_58%_48%,#3a1a0b_30%,transparent_100%),radial-gradient(circle_at_85%_15%,#6b2c0e,transparent_45%),radial-gradient(circle_at_80%_85%,#64290e,transparent_50%)] bg-[#57260e]";
const people = [
  { n: "Samiksha Dhumal", l: "S", speaking: 1, bg: "bg-[radial-gradient(circle,#5a30ab_10%,#4a1e9a_50%,#401690_90%)]", av: "bg-[#512da8]" },
  { n: "Sanjay S B", bg: brown },
  { n: "Neha BJ", bg: brown, mute: "bg-[#591c02] text-[#ffb695]" },
  { n: "Basamma GK", l: "B", bg: "bg-[radial-gradient(circle,#42693a_20%,#275416_55%,#1f4a10_95%)]", av: "bg-[#33691e]", mute: "bg-[#0d3701] text-[#9cdb7e]" },
  { n: "Samiksha Dhumal", l: "S", bg: "bg-[radial-gradient(circle,#8c3b98_25%,#80258d_60%,#741b80_95%)]", av: "bg-[#ab47bc]", mute: "bg-[#560066] text-[#f7adff]" },
  { n: "Prashanth Babu", bg: brown },
];
const Tile = ({ p }) => (
  <div className={"relative flex h-[277px] items-center justify-center overflow-hidden rounded-[18px] text-white shadow-[inset_0_0_16px_rgba(0,0,0,0.3)] " + p.bg}>
    {p.speaking && <div className="absolute inset-0 rounded-[18px] border-[3px] border-[#cdb9ff]" />}
    {p.l ? (
      <div className={p.speaking ? "rounded-full bg-[#6b42b3] p-[7px]" : ""}>
        <div className={"flex items-center justify-center rounded-full font-['Roboto',sans-serif] text-[49px] " + p.av + (p.speaking ? " size-24 border-[3px] border-[#cdb9ff]" : " size-[90px]")}>{p.l}</div>
      </div>
    ) : <Swirl c="size-[90px]" />}
    {p.mute && <span className={"absolute right-[10px] top-[10px] flex size-[30px] items-center justify-center rounded-full " + p.mute}><MdMicOff size={20} /></span>}
    <span className="absolute bottom-[11px] left-[15px] whitespace-nowrap text-[19.500px] font-medium tracking-[-0.150px] [text-shadow:0_1px_2px_rgba(0,0,0,0.6)]">{p.n}</span>
  </div>
);

const btn = "flex h-[60px] items-center justify-center rounded-full bg-[#333537] text-[#e3e3e3] ";

function Meet() {
  return (
    <main className="flex h-[869px] shrink-0 flex-col bg-[#131314] font-['Inter',sans-serif] text-white">
      <div className="flex gap-5 px-5 pt-5 pr-[19px]">
        <div className="flex h-[50px] w-[45px] items-center justify-center rounded-lg bg-[#fbbc04] pb-[5px] text-[#202124]"><MdDomainDisabled size={25} /></div>
        <div className="flex h-[50px] flex-1 items-center rounded-lg bg-[#3c4043] pl-5">
          <span className="flex size-[30px] items-center justify-center rounded-full bg-[#ab47bc] font-['Roboto',sans-serif] text-[17px]">S</span>
          <span className="ml-5 text-[17.500px] font-medium tracking-[0px]">Samiksha Dhumal (Presenting, annotating)</span>
        </div>
      </div>
      <div className="flex items-center gap-5 pl-[21px] pr-[19px] pt-5">
        <SharedScreen />
        <div className="grid flex-1 grid-cols-3 gap-[15px] pt-px">{people.map((p, i) => <Tile key={i} p={p} />)}</div>
      </div>
      <div className="flex flex-1 items-center">
        <div className="flex w-[608px] items-center pl-[30px] text-[19.500px] font-medium"><span className="w-[91px] tracking-[-0.500px]">5:38 PM</span><div className="h-5 w-px bg-white" /><span className="ml-[15px] tracking-[-0.080px]">Weekly Update call</span></div>
        <div className="flex gap-2.5">
          <div className="flex w-[110px] rounded-full bg-[#282a2c]">
            <div className="flex w-[50px] items-center justify-center gap-1 pl-2"><i className="size-[4px] rounded-full bg-[#a8c7fa]" /><i className="size-[4px] rounded-full bg-[#a8c7fa]" /><i className="size-[4px] rounded-full bg-[#a8c7fa]" /></div>
            <div className={btn + "w-[60px]"}><MdMicNone size={29} /></div>
          </div>
          <div className="flex w-[110px] rounded-[18px] bg-[#601410] text-[#f9dedc]">
            <div className="flex w-[50px] items-center justify-center pl-2"><MdKeyboardArrowUp size={22} /></div>
            <div className="flex h-[60px] w-[60px] items-center justify-center rounded-[16px] bg-[#f9dedc] text-[#601410]"><MdOutlineVideocamOff size={30} /></div>
          </div>
          <div className={btn + "w-[70px]"}><svg viewBox="0 0 24 22" className="h-[22px] w-6" fill="none" stroke="#e3e3e3" strokeWidth="2.400"><rect x="1.200" y="1.200" width="21.600" height="19.600" rx="1" /><path d="M10.500 9.500V8H6v6h4.500v-1.500M18 9.500V8h-4.500v6H18v-1.500" strokeWidth="1.900" /></svg></div>
          <div className={btn + "w-[70px]"}><MdOutlineEmojiEmotions size={31} /></div>
          <div className={btn + "w-[70px]"}><svg viewBox="0 0 26 21" className="h-[21px] w-[26px]" fill="none" stroke="#e3e3e3" strokeWidth="2.400"><rect x="1.200" y="1.200" width="23.600" height="18.600" rx="1.500" /><path d="M13 15.500V7M9.200 10l3.800-3.800 3.800 3.800" /></svg></div>
          <div className={btn + "w-[70px]"}><MdOutlineBackHand size={28} className="-scale-x-100" /></div>
          <div className={btn + "w-[45px]"}><MdMoreVert size={30} /></div>
          <div className="flex h-[60px] w-[90px] items-center justify-center rounded-full bg-[#dc362e]"><MdOutlineCallEnd size={31} /></div>
        </div>
        <div className="ml-auto flex items-center gap-[30px] pr-[29px]">
          <MdOutlineInfo size={30} />
          <div className="relative"><MdOutlinePeopleAlt size={30} /><span className="absolute -top-[27px] left-[16px] flex size-[26px] items-center justify-center rounded-full bg-[#5f6368] text-[14px] font-semibold">7</span></div>
          <MdOutlineChat size={30} />
          <MdApps size={32} className="-mx-px" />
        </div>
      </div>
    </main>
  );
}

/* ---------- desktop strip under the browser ---------- */
const Slot = ({ children, dot }) => (
  <div className="flex w-[55px] flex-col items-center">
    <div className="flex h-[45px] items-end">{children}</div>
    {dot && <div className="mt-[5px] h-[4px] w-[8px] rounded-full bg-[#6b6d6f]" />}
  </div>
);

function Desktop() {
  return (
    <footer className="relative flex h-[59px] shrink-0 bg-[linear-gradient(to_right,#d6dbe8_0,#d3d6de_180px,#c6c8cb_330px,#c5c8c6_1000px,#cccecd_1600px,#d9dce6_1760px,#d9dce4_100%)] font-['Open_Sans',sans-serif] text-[#1f1f1f]">
      <div className="flex w-[475px] pl-[24px] pt-[10px]">
        <div className="relative h-[34px] w-[36px]">
          <svg viewBox="0 0 34 34" className="size-[34px]"><circle cx="17" cy="20" r="13" fill="#f39c2c" /><path d="M6 18a5 5 0 0 1 0-10 7 7 0 0 1 13 1v9z" fill="#8fb6ee" /><path d="M18 32a4.500 4.500 0 0 1-1-9 6 6 0 0 1 11 0 4.500 4.500 0 0 1 0 9z" fill="#a9c8f6" stroke="#6b93d8" strokeWidth=".7" /></svg>
          <span className="absolute -top-[1px] left-[15px] flex size-[20px] items-center justify-center rounded-full bg-[#c42b1c] text-[12.500px] tracking-[-0.500px] text-white">9+</span>
        </div>
        <div className="ml-[4px] text-[14.500px] leading-[20px] tracking-[-0.250px]"><div className="tracking-[-0.500px]">26°C</div><div className="text-[#55585f]">Partly sunny</div></div>
      </div>
      <svg viewBox="0 0 29 29" className="mt-[17px] size-[29px]" fill="#0f83d1"><path d="M0 0h14v14H0zM15 0h14v14H15zM0 15h14v14H0zM15 15h14v14H15z" /></svg>
      <div className="ml-[18px] mt-[11px] flex h-[39px] w-[273px] items-center rounded-full border-b border-[#a9abab] bg-[#e3e4e5] pl-[13px] pr-[10px] pt-[2px]">
        <svg viewBox="0 0 20 20" className="size-5" fill="none" stroke="#222" strokeWidth="2"><circle cx="9" cy="8" r="7" /><path d="M14 13l5 6" /></svg>
        <span className="ml-[12px] flex-1 text-[17px] tracking-[-0.400px] text-[#55585c]">Search</span>
        <svg viewBox="0 0 54 28" className="h-7 w-[54px]"><path d="M14 14Q16 1 30 1q15 0 18 14-16 8-34-1z" fill="#5f8a33" /><path d="M18 12l8-9M26 16l4-14M36 16V3M43 15L38 4M17 10h28" stroke="#3f6322" fill="none" /><path d="M14 14Q4 16 1 9q0-6 7-6 5 1 5 7l3 4zM18 17l-4 8 4 2 6-9zM38 18l6 9 4-1-4-9zM47 13l6 6-6-1z" fill="#89a94b" /><circle cx="6" cy="8" r="1.200" fill="#111" /></svg>
      </div>
      <div className="ml-[3px] flex">
        <Slot><svg viewBox="0 0 30 30" className="size-[29px]"><path d="M0 7h22v22H0z" fill="#2a2b2d" /><path d="M9 0h21v19H9z" fill="#e8e8e8" opacity=".8" /></svg></Slot>
        <Slot dot><svg viewBox="0 0 30 28" className="h-7 w-[30px]"><path d="M0 0h10l3 4h17v24H0z" fill="#f3b92b" /><path d="M0 6h30v20H0z" fill="#fbcf4e" /><path d="M5 26v-6q0-2 2-2h16q2 0 2 2v6z" fill="#0f6cbd" /></svg></Slot>
        <Slot dot><BiLogoVisualStudio size={34} className="-mb-[2px] text-[#1583cf]" /></Slot>
        <Slot>
          <svg viewBox="0 0 30 32" className="h-[32px] w-[30px]">
            <rect width="30" height="32" rx="3" fill="#2c5f80" />
            <path d="M3 6c6 0 12 3 16 9 2 3 1 6 3 9l4 4M7 8c-1 4 2 7 3 10l2 5 2-4c3 2 4 5 5 9" fill="none" stroke="#dfe9f0" strokeWidth="1.600" />
          </svg>
        </Slot>
        <Slot>
          <svg viewBox="0 0 30 30" className="size-[30px]">
            <circle cx="15" cy="15" r="15" fill="#f26b3a" />
            <path d="M8 24l9-10 3 2-9 8zM18 12l3-3 2 2-3 4z" fill="#fff" /><circle cx="22" cy="8" r="3" fill="#fff" /><path d="M11 22l8-10" stroke="#f26b3a" />
          </svg>
        </Slot>
        <div className="flex w-[55px] justify-center"><div className="flex h-[54px] w-[48px] flex-col items-center rounded-md border-b border-[#b5b7b7] bg-[#e0e2e0] pt-[15px]"><Chrome c="size-[30px]" /><div className="mt-[5px] h-[4px] w-5 rounded-full bg-[#0f6cbd]" /></div></div>
        <Slot dot><svg viewBox="0 0 24 32" className="h-8 w-6"><path d="M0 0h24v30H0z" fill="#45b3d3" /><path d="M0 29h24v3H0z" fill="#a0521c" /><path d="M5 9h14M5 14h14M5 19h14" stroke="#145f7c" strokeWidth="2" /></svg></Slot>
        <Slot dot><div className="relative"><svg viewBox="0 0 30 30" className="size-[30px]"><path d="M6 0h24v30H6z" fill="#1c55b0" /><path d="M6 0h24v10H6z" fill="#3f92e2" /><path d="M0 8h17v16H0z" fill="#17459c" /></svg><span className="absolute left-[3px] top-[7px] text-[12px] font-bold text-white">W</span></div></Slot>
        <Slot dot><svg viewBox="0 0 30 28" className="h-7 w-[30px]"><path d="M0 0h30v25H0z" fill="#35383b" /><path d="M0 0h30v5H0z" fill="#5b5e61" /><path d="M5 9l6 5-6 6M14 20h10" stroke="#e8e8e8" strokeWidth="2.500" fill="none" /></svg></Slot>
        <Slot dot><svg viewBox="0 0 28 30" className="h-[30px] w-7"><path d="M0 0h28v29H0z" fill="#2d56ad" /><path d="M0 26L14 13l14 14v2H0z" fill="#35bde2" /><circle cx="21" cy="8" r="3" fill="#dfeaff" /></svg></Slot>
        <Slot dot><svg viewBox="0 0 30 30" className="size-[30px]" fill="none"><path d="M2 0h18v18H2z" fill="#f3f3f3" stroke="#cf3e1f" strokeWidth="3" strokeDasharray="3 2" /><path d="M17 2v20M8 17h16" stroke="#7e8589" strokeWidth="3" /><circle cx="27" cy="17" r="3" stroke="#2a9de0" strokeWidth="2" /><circle cx="17" cy="26" r="3" stroke="#2a9de0" strokeWidth="2" /></svg></Slot>
        <Slot dot><svg viewBox="0 0 30 30" className="size-[30px]"><path d="M1 14Q1 0 16 0t13 13q-1 6-7 4t-6 4 0 6Q1 27 1 14z" fill="#1f95dc" /><circle cx="9" cy="9" r="2.800" fill="#e0452b" /><circle cx="16" cy="6" r="2.500" fill="#f7c02c" /><circle cx="6" cy="15" r="2.500" fill="#5cb531" /><path d="M20 8h6v10h-6z" fill="#e0b074" /><path d="M21 17h4l-2 13z" fill="#8a4b1c" /></svg></Slot>
      </div>
      <div className="ml-auto flex items-start pr-[24px] pt-[21px]">
        <MdKeyboardArrowUp size={21} className="mr-[19px]" />
        <CloudOff size={22} strokeWidth={1.600} className="mr-[18px]" />
        <Mic size={22} strokeWidth={1.600} className="mr-[22px] text-[#2a5caa]" />
        <div className="-mt-[7px] w-[30px] text-center text-[13.500px] leading-[18.500px] tracking-[-0.300px]">ENG<br />IN</div>
        <Wifi size={20} strokeWidth={1.800} className="ml-[23px]" />
        <Volume2 size={20} strokeWidth={1.600} className="ml-[10px]" />
        <svg viewBox="0 0 22 20" className="ml-[10px] h-[20px] w-[22px]"><rect x="3" y="6" width="15" height="11" rx="3" fill="#b9bbc0" stroke="#1f1f1f" strokeWidth="1.700" /><rect x="5.500" y="8.500" width="10" height="6" rx="1" fill="#1f1f1f" /><path d="M19.500 9.500v4" stroke="#1f1f1f" strokeWidth="2.200" /><path d="M5 0L1 6h3l-1 5 5-6H5z" fill="#1f1f1f" /></svg>
        <div className="-mt-[11px] ml-[18px] w-[78px] whitespace-nowrap text-right text-[14.500px] leading-[20px] tracking-[-0.200px]">17:38<br />23-05-2025</div>
      </div>
      <div className="absolute left-[211px] top-0 flex h-[19px] w-[1498px] items-center overflow-hidden rounded-b-lg bg-[#181818] pb-[5px] text-[14px] tracking-[-0.350px] text-[#cccccc] shadow-[0_2px_8px_rgba(0,0,0,0.35)]">
        <div className="flex h-[30px] w-[42px] shrink-0 items-center justify-center bg-[#0078d4] text-white"><VscRemote size={17} /></div>
        <VscError size={18} className="ml-[9px]" /><span className="ml-[4px] leading-none">0</span><VscWarning size={18} className="ml-[5px]" /><span className="ml-[4px] leading-none">0</span>
        <div className="ml-auto flex items-center whitespace-nowrap leading-none">
          <span className="w-[114px]">Ln 259, Col 22</span><span className="w-[81px]">Spaces: 2</span><span className="w-[59px]">UTF-8</span><span className="w-[55px]">CRLF</span><span className="w-[23px]">{"{ }"}</span><span className="w-[85px]">JavaScript</span>
          <svg viewBox="0 0 20 18" className="h-[18px] w-5" fill="none" stroke="#ccc" strokeWidth="2"><rect x="4" y="1" width="5" height="6" rx="2" /><rect x="11" y="1" width="5" height="6" rx="2" /><path d="M2 9v5q8 5 16 0V9q-8-2-16 0zM7.500 10.500v3M12.500 10.500v3" /></svg>
          <VscCheckAll size={18} className="ml-[17px]" /><span className="ml-[3px] w-[68px]">Prettier</span><VscBellDot size={18} className="mr-[19px]" />
        </div>
      </div>
    </footer>
  );
}

export default function App() {
  return (
    <div className="flex h-[1079px] w-[1919px] flex-col overflow-hidden">
      <Browser />
      <Meet />
      <Desktop />
    </div>
  );
}
